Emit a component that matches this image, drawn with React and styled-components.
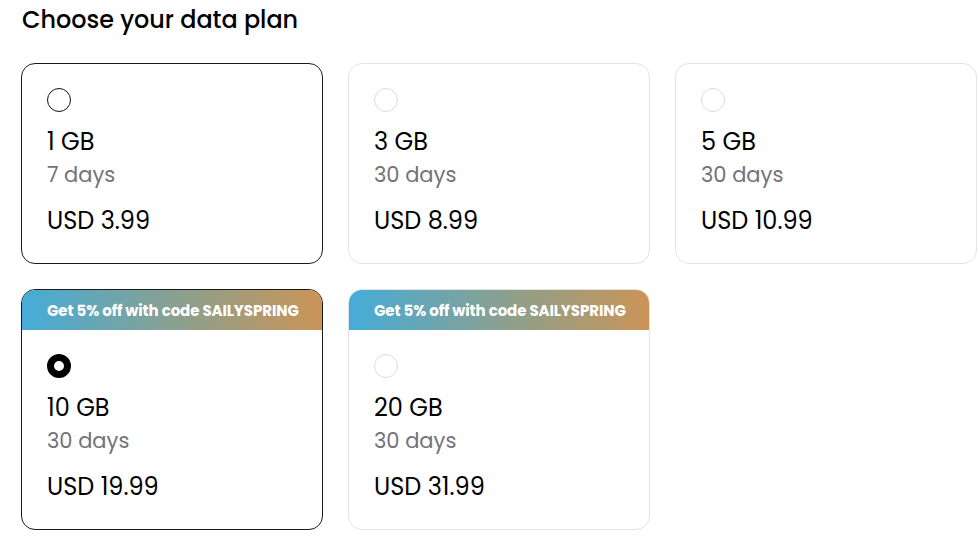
import React from "react";
import styled, { createGlobalStyle } from "styled-components";

const GlobalStyle = createGlobalStyle`
  body {
    margin: 0;
    background: #ffffff;
    font-family: "Poppins", "Inter", "Liberation Sans", sans-serif;
    color: #000000;
  }
`;

const Page = styled.div`
  padding: 3px 0 0 21px;
`;

const Title = styled.h2`
  margin: 0 0 27px 1px;
  font-size: 23.9px;
  font-weight: 500;
  line-height: 33px;
`;

const Grid = styled.div`
  display: grid;
  grid-template-columns: repeat(3, 302px);
  gap: 25px;
`;

const Card = styled.label`
  display: flex;
  flex-direction: column;
  border: 1px solid ${(p) => (p.$active ? "#1a1a1a" : "#e3e3e3")};
  border-radius: 14px;
  overflow: hidden;
  background: #fff;
  cursor: pointer;
`;

const Banner = styled.div`
  height: 40px;
  display: flex;
  align-items: center;
  padding: 0 20px 0 25px;
  background: linear-gradient(90deg, #45acd8 0%, #8f9f8a 55%, #cb9458 100%);
  color: #ffffff;
  font-size: 15px;
  font-weight: 700;
  letter-spacing: -0.1px;
  white-space: nowrap;
`;

const Body = styled.div`
  display: flex;
  flex-direction: column;
  padding: 24px 25px 26px;
`;

const Radio = styled.span`
  width: 24px;
  height: 24px;
  box-sizing: border-box;
  border-radius: 50%;
  border: ${(p) =>
    p.$checked ? "7px solid #000" : p.$dark ? "1.5px solid #111" : "1px solid #dcdcdc"};
  margin-bottom: 15px;
`;

const Amount = styled.div`
  font-size: 24px;
  font-weight: 400;
  line-height: 30px;
`;

const Duration = styled.div`
  font-size: 21px;
  line-height: 30px;
  color: #72727a;
  margin-top: 3px;
`;

const Price = styled.div`
  font-size: 24px;
  font-weight: 400;
  line-height: 32px;
  margin-top: 15px;
`;

const plans = [
  { gb: "1 GB", days: "7 days", price: "USD 3.99", hover: true },
  { gb: "3 GB", days: "30 days", price: "USD 8.99" },
  { gb: "5 GB", days: "30 days", price: "USD 10.99" },
  { gb: "10 GB", days: "30 days", price: "USD 19.99", promo: true, checked: true },
  { gb: "20 GB", days: "30 days", price: "USD 31.99", promo: true },
];

export default function App() {
  return (
    <>
      <GlobalStyle />
      <Page>
        <Title>Choose your data plan</Title>
        <Grid>
          {plans.map((p) => (
            <Card key={p.gb} $active={p.hover || p.checked}>
              {p.promo && <Banner>Get 5% off with code SAILYSPRING</Banner>}
              <Body>
                <Radio $checked={p.checked} $dark={p.hover} />
                <Amount>{p.gb}</Amount>
                <Duration>{p.days}</Duration>
                <Price>{p.price}</Price>
              </Body>
            </Card>
          ))}
        </Grid>
      </Page>
    </>
  );
}
